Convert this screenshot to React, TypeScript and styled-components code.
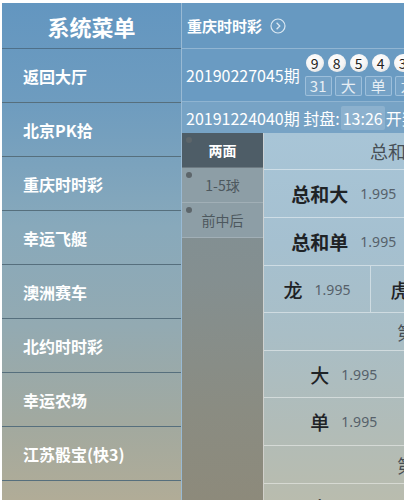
import styled, { createGlobalStyle } from 'styled-components';

const GlobalStyle = createGlobalStyle`
  html, body {
    margin: 0;
    padding: 0;
    background: #ffffff;
  }
  body {
    font-family: "Noto Sans CJK SC", "Noto Sans", "Liberation Sans", sans-serif;
  }
`;

const St = {
  Page: styled.div`
    display: flex;
    width: 402px;
    height: 497px;
    margin: 3px 0 0 2px;
    overflow: hidden;
  `,

  Sidebar: styled.div`
    width: 179px;
    flex: none;
    display: flex;
    flex-direction: column;
    background: linear-gradient(
      180deg,
      #6396c0 0%,
      #6e9cbf 20%,
      #88a9bb 45%,
      #93aab2 65%,
      #a2a99f 85%,
      #b1ac97 100%
    );
  `,
  SidebarTitle: styled.div`
    height: 45px;
    flex: none;
    display: flex;
    align-items: center;
    justify-content: center;
    color: #fff;
    font-size: 22px;
    font-weight: 700;
    border-bottom: 1px solid #4f7089;
  `,
  MenuItem: styled.div`
    height: 53px;
    flex: none;
    display: flex;
    align-items: center;
    padding-left: 21px;
    color: #fff;
    font-size: 16px;
    font-weight: 700;
    border-bottom: 1px solid #566f7d;
  `,

  Main: styled.div`
    flex: 1;
    min-width: 0;
    display: flex;
    flex-direction: column;
    border-left: 1px solid rgba(255, 255, 255, 0.3);
    overflow: hidden;
    background: #6d9cc2;
  `,
  HeaderRow: styled.div`
    height: 45px;
    flex: none;
    display: flex;
    align-items: center;
    gap: 8px;
    padding-left: 5px;
    color: #fff;
    font-size: 15px;
    font-weight: 700;
    background: #6799c1;
    border-bottom: 1px solid rgba(255, 255, 255, 0.28);
  `,
  ResultRow: styled.div`
    height: 52px;
    flex: none;
    display: flex;
    align-items: center;
    gap: 5px;
    padding-left: 4px;
    white-space: nowrap;
    background: #6a9bc2;
    border-bottom: 1px solid rgba(255, 255, 255, 0.25);
  `,
  Period: styled.span`
    color: #fff;
    font-size: 16px;
  `,
  Draw: styled.div`
    display: flex;
    flex-direction: column;
    gap: 4px;
  `,
  BallRow: styled.div`
    display: flex;
    gap: 4px;
    padding-left: 1px;
  `,
  Ball: styled.span`
    width: 18px;
    height: 18px;
    flex: none;
    border-radius: 50%;
    background: radial-gradient(circle at 40% 35%, #ffffff 0%, #f4f4f4 55%, #d6d6d6 100%);
    color: #222;
    font-size: 14px;
    line-height: 18px;
    text-align: center;
  `,
  TagRow: styled.div`
    display: flex;
    gap: 3px;
  `,
  Tag: styled.span`
    width: 25px;
    height: 18px;
    flex: none;
    border: 1px solid rgba(190, 215, 235, 0.55);
    border-radius: 2px;
    background: rgba(255, 255, 255, 0.08);
    color: #e6eef4;
    font-size: 15px;
    line-height: 18px;
    text-align: center;
  `,
  NextRow: styled.div`
    height: 31px;
    flex: none;
    display: flex;
    align-items: center;
    padding-left: 4px;
    white-space: nowrap;
    color: #fff;
    font-size: 16px;
    background: #77a3c5;
  `,
  Countdown: styled.span`
    display: inline-block;
    height: 24px;
    line-height: 24px;
    padding: 0 2px;
    margin: 0 1px 0 1px;
    background: rgba(255, 255, 255, 0.16);
    border-radius: 2px;
  `,

  Body: styled.div`
    flex: 1;
    display: flex;
    min-height: 0;
  `,
  Tabs: styled.div`
    width: 81px;
    flex: none;
    display: flex;
    flex-direction: column;
    border-right: 1px solid rgba(255, 255, 255, 0.6);
    background: linear-gradient(180deg, #7f9097 0%, #848f90 40%, #8a8c82 75%, #8d8a7b 100%);
  `,
  Tab: styled.div<{ $active?: boolean }>`
    position: relative;
    height: 34px;
    flex: none;
    display: flex;
    align-items: center;
    justify-content: center;
    font-size: 14px;
    font-weight: ${(p) => (p.$active ? 700 : 400)};
    color: ${(p) => (p.$active ? '#ffffff' : '#4d585e')};
    background: ${(p) => (p.$active ? '#4e5d67' : '#8d9ea6')};
    border-bottom: 1px solid rgba(255, 255, 255, 0.18);
    &::before {
      content: '';
      position: absolute;
      left: 4px;
      top: 4px;
      width: 6px;
      height: 6px;
      border-radius: 50%;
      background: #5d666b;
    }
  `,
  Content: styled.div`
    width: 320px;
    flex: none;
    display: flex;
    flex-direction: column;
    background: linear-gradient(
      180deg,
      #a8c5d7 0%,
      #a5c0d0 30%,
      #a9bec6 55%,
      #b1bcb8 80%,
      #b9bcae 100%
    );
  `,
  GroupTitle: styled.div<{ $h: number }>`
    height: ${(p) => p.$h}px;
    flex: none;
    display: flex;
    align-items: center;
    justify-content: center;
    font-size: 18px;
    color: #474f55;
    border-bottom: 1px solid rgba(255, 255, 255, 0.45);
  `,
  OddsRow: styled.div<{ $h: number }>`
    height: ${(p) => p.$h}px;
    flex: none;
    display: flex;
    border-bottom: 1px solid rgba(255, 255, 255, 0.45);
  `,
  Cell: styled.div`
    flex: 1;
    display: flex;
    align-items: center;
    justify-content: center;
    gap: 12px;
    border-right: 1px solid rgba(255, 255, 255, 0.45);
    &:last-child {
      border-right: none;
    }
  `,
  Name: styled.span<{ $strong?: boolean }>`
    font-size: 19px;
    font-weight: ${(p) => (p.$strong ? 700 : 500)};
    color: #1f2326;
  `,
  Odds: styled.span`
    font-size: 14px;
    color: #56616a;
    font-family: "Noto Sans", "Liberation Sans", sans-serif;
  `,
};

const CircleArrow = () => (
  <svg width="16" height="16" viewBox="0 0 16 16" fill="none">
    <circle cx="8" cy="8" r="7" stroke="#dbe8f2" strokeWidth="1.2" />
    <path d="M6.6 4.8 L9.8 8 L6.6 11.2" stroke="#dbe8f2" strokeWidth="1.3" />
  </svg>
);

const menus = ['返回大厅', '北京PK拾', '重庆时时彩', '幸运飞艇', '澳洲赛车', '北约时时彩', '幸运农场', '江苏骰宝(快3)', '广东快乐十分'];

type Row =
  | { kind: 'title'; text: string; h: number }
  | { kind: 'odds'; cells: string[]; h: number; strong?: boolean };

const rows: Row[] = [
  { kind: 'title', text: '总和、龙虎和', h: 36 },
  { kind: 'odds', cells: ['总和大', '总和小'], h: 47, strong: true },
  { kind: 'odds', cells: ['总和单', '总和双'], h: 47, strong: true },
  { kind: 'odds', cells: ['龙', '虎', '和'], h: 46 },
  { kind: 'title', text: '第一球', h: 37 },
  { kind: 'odds', cells: ['大', '小'], h: 46 },
  { kind: 'odds', cells: ['单', '双'], h: 47 },
  { kind: 'title', text: '第二球', h: 37 },
  { kind: 'odds', cells: ['大', '小'], h: 46 },
];

const App = () => {
  return (
    <>
      <GlobalStyle />
      <St.Page>
        <St.Sidebar>
          <St.SidebarTitle>系统菜单</St.SidebarTitle>
          {menus.map((m) => (
            <St.MenuItem key={m}>{m}</St.MenuItem>
          ))}
        </St.Sidebar>
        <St.Main>
          <St.HeaderRow>
            重庆时时彩
            <CircleArrow />
          </St.HeaderRow>
          <St.ResultRow>
            <St.Period>20190227045期</St.Period>
            <St.Draw>
              <St.BallRow>
                {[9, 8, 5, 4, 3].map((n, i) => (
                  <St.Ball key={i}>{n}</St.Ball>
                ))}
              </St.BallRow>
              <St.TagRow>
                {['31', '大', '单', '龙'].map((t) => (
                  <St.Tag key={t}>{t}</St.Tag>
                ))}
              </St.TagRow>
            </St.Draw>
          </St.ResultRow>
          <St.NextRow>
            20191224040期 封盘:<St.Countdown>13:26</St.Countdown>开奖:13:36
          </St.NextRow>
          <St.Body>
            <St.Tabs>
              <St.Tab $active>两面</St.Tab>
              <St.Tab>1-5球</St.Tab>
              <St.Tab>前中后</St.Tab>
            </St.Tabs>
            <St.Content>
              {rows.map((r, i) =>
                r.kind === 'title' ? (
                  <St.GroupTitle key={i} $h={r.h}>
                    {r.text}
                  </St.GroupTitle>
                ) : (
                  <St.OddsRow key={i} $h={r.h}>
                    {r.cells.map((c) => (
                      <St.Cell key={c}>
                        <St.Name $strong={r.strong}>{c}</St.Name>
                        <St.Odds>1.995</St.Odds>
                      </St.Cell>
                    ))}
                  </St.OddsRow>
                ),
              )}
            </St.Content>
          </St.Body>
        </St.Main>
      </St.Page>
    </>
  );
};

export default App;
